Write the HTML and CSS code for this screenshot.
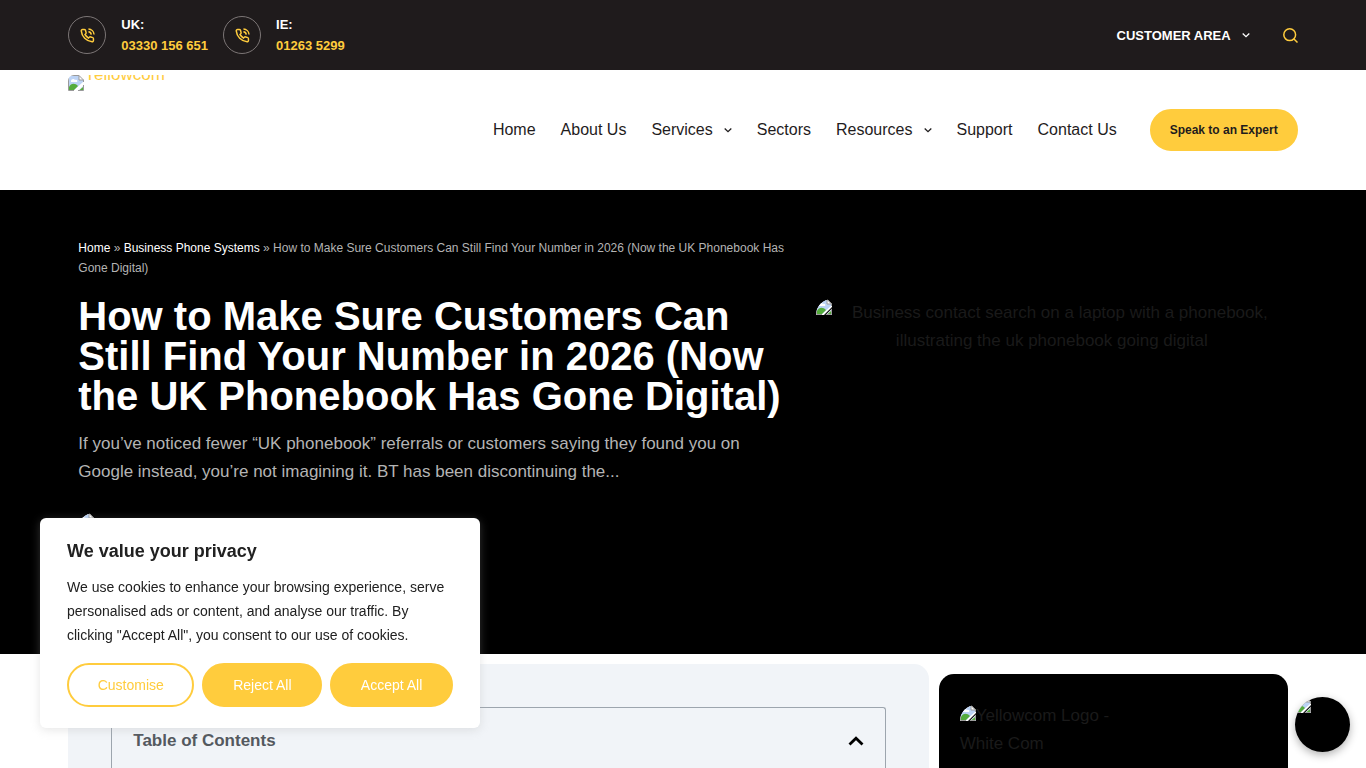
FILE: index.html
```html
<!DOCTYPE html>
<html lang="en">
<head>
  <meta charset="UTF-8">
  <title>How to Make Sure Customers Can Still Find Your Number in 2026 - Yellowcom</title>
  <meta name="viewport" content="width=device-width, initial-scale=1">
  <link rel="stylesheet" href="styles.css">
</head>
<body>
  <!-- Shared icons -->
  <svg class="sprite" aria-hidden="true">
    <symbol id="missing" viewBox="0 0 16 16">
      <path d="M0 0h11l5 5v3L8 16H0z" fill="#fff"/>
      <path d="M1 1h10v4h4v2L6 15H1z" fill="#bcd3f5"/>
      <path d="M3 6c0-2 3-3 4-1 2-1 3 1 2 2H3z" fill="#fff"/>
      <path d="M1 15v-3c2-4 6-4 9-1l-4 4z" fill="#55ac3c"/>
      <path d="M16 9.500V16H9.500z" fill="#e4eefb"/>
      <path d="M15 12v3h-3.500z" fill="#55ac3c"/>
      <path d="M.5 15.500V.5H11l4.500 4.500v2M11 .5V5h4.500M15.500 10v5.500H10M.5 15.500H6" fill="none" stroke="#9a9a9a"/>
    </symbol>
    <symbol id="phone" viewBox="0 0 24 24">
      <path d="M21.500 17v3a2 2 0 0 1-2.200 2A19 19 0 0 1 2 4.700 2 2 0 0 1 4 2.500h3a2 2 0 0 1 2 1.700c.1 1 .4 1.900.7 2.800a2 2 0 0 1-.5 2.100L8 10.400a16 16 0 0 0 5.600 5.600l1.300-1.200a2 2 0 0 1 2.100-.5c.9.3 1.800.6 2.800.7a2 2 0 0 1 1.700 2zM13.500 6a5 5 0 0 1 4.500 4.500M13.500 1.500a9.500 9.500 0 0 1 9 9" fill="none" stroke="currentColor" stroke-width="2.400"/>
    </symbol>
    <symbol id="chevron" viewBox="0 0 8 8">
      <path d="M.7 2.500 4 5.700l3.300-3.200" fill="none" stroke="currentColor" stroke-width="1.300"/>
    </symbol>
  </svg>

  <div class="topbar">
    <div class="container">
      <div class="contact">
        <span class="contact-icon"><svg><use href="#phone"/></svg></span>
        <p>UK:<br><a href="tel:03330156651">03330 156 651</a></p>
      </div>
      <div class="contact">
        <span class="contact-icon"><svg><use href="#phone"/></svg></span>
        <p>IE:<br><a href="tel:012635299">01263 5299</a></p>
      </div>
      <a class="customer dropdown" href="#">CUSTOMER AREA<svg class="chevron"><use href="#chevron"/></svg></a>
      <button class="search" type="button" aria-label="Search">
        <svg viewBox="0 0 15 15"><circle cx="6.700" cy="6.700" r="5.900" fill="none" stroke="currentColor" stroke-width="1.500"/><path d="m11 11 3.500 3.500" stroke="currentColor" stroke-width="1.500"/></svg>
      </button>
    </div>
  </div>

  <header class="header">
    <div class="container">
      <a class="logo" href="#"><svg class="missing"><use href="#missing"/></svg><span>Yellowcom</span></a>
      <nav class="menu">
        <a href="#">Home</a>
        <a href="#">About Us</a>
        <a class="dropdown" href="#">Services<svg class="chevron"><use href="#chevron"/></svg></a>
        <a href="#">Sectors</a>
        <a class="dropdown" href="#">Resources<svg class="chevron"><use href="#chevron"/></svg></a>
        <a href="#">Support</a>
        <a href="#">Contact Us</a>
      </nav>
      <button class="btn expert" type="button">Speak to an Expert</button>
    </div>
  </header>

  <section class="hero">
    <div class="container">
      <div class="hero-text">
        <p class="breadcrumbs"><a href="#">Home</a> » <a href="#">Business Phone Systems</a> » How to Make Sure Customers Can Still Find Your Number in 2026 (Now the UK Phonebook Has Gone Digital)</p>
        <h1>How to Make Sure Customers Can Still Find Your Number in 2026 (Now the UK Phonebook Has Gone Digital)</h1>
        <p class="excerpt">If you’ve noticed fewer “UK phonebook” referrals or customers saying they found you on Google instead, you’re not imagining it. BT has been discontinuing the...</p>
        <svg class="missing round"><use href="#missing"/></svg>
      </div>
      <div class="hero-image">
        <svg class="missing round"><use href="#missing"/></svg>
        <p>Business contact search on a laptop with a phonebook, illustrating the uk phonebook going digital</p>
      </div>
    </div>
  </section>

  <main class="container content">
    <article class="article">
      <div class="toc">
        <h4>Table of Contents</h4>
        <button type="button" aria-label="Close table of contents">
          <svg viewBox="0 0 16 10"><path d="m1.500 8.500 6.500-6.300 6.500 6.300" fill="none" stroke="currentColor" stroke-width="2.800"/></svg>
        </button>
      </div>
    </article>
    <aside class="sidebar">
      <p><svg class="missing round"><use href="#missing"/></svg>Yellowcom Logo - White Com</p>
    </aside>
  </main>

  <div class="cookies" role="dialog" aria-labelledby="cookies-title">
    <h2 id="cookies-title">We value your privacy</h2>
    <p>We use cookies to enhance your browsing experience, serve personalised ads or content, and analyse our traffic. By clicking "Accept All", you consent to our use of cookies.</p>
    <div class="cookies-buttons">
      <button class="btn outline" type="button">Customise</button>
      <button class="btn" type="button">Reject All</button>
      <button class="btn" type="button">Accept All</button>
    </div>
  </div>

  <button class="chat" type="button" aria-label="Open chat"><svg class="missing"><use href="#missing"/></svg></button>
</body>
</html>
```
FILE: styles.css
```css
* {
  box-sizing: border-box;
}

body {
  font-family: "Liberation Sans", Arial, sans-serif;
  font-size: 17px;
  line-height: 28px;
  margin: 0;
  height: 100vh;
  overflow: hidden;
  display: flex;
  flex-direction: column;
  color: #1f1c1d;
  background: #fff;
}

h1, h2, h4, p {
  margin: 0;
}

a {
  color: inherit;
  text-decoration: none;
}

button {
  font-family: inherit;
  color: #000;
  border: none;
  padding: 0;
  background: none;
  cursor: pointer;
}

.sprite {
  position: absolute;
  width: 0;
  height: 0;
}

.container {
  width: 90%;
  max-width: 1230px;
  margin: 0 auto;
  display: flex;
}

.missing {
  width: 16px;
  height: 16px;
  flex: none;
}

.round {
  border-radius: 16px 0 0 0;
}

.dropdown {
  display: flex;
  align-items: center;
  gap: 11px;
}

.chevron {
  width: 8px;
  height: 8px;
}

.btn {
  background: #ffcc3d;
  border: 2px solid #ffcc3d;
  border-radius: 22px;
}

/* Top bar */
.topbar {
  background: #1f1b1c;
  color: #fff;
  font-size: 13px;
  font-weight: bold;
  line-height: 21px;
  flex: none;
}

.topbar .container {
  height: 70px;
  align-items: center;
}

.contact {
  display: flex;
  align-items: center;
  gap: 15px;
  margin-right: 15px;
}

.contact a {
  color: #ffcc3d;
}

.contact-icon {
  width: 38px;
  height: 38px;
  border: 1px solid #7c7676;
  border-radius: 50%;
  color: #ffcc3d;
  display: flex;
  align-items: center;
  justify-content: center;
}

.contact-icon svg {
  width: 15px;
  height: 15px;
}

.customer {
  margin-left: auto;
}

.search {
  color: #ffcc3d;
  margin-left: 33px;
  width: 15px;
  height: 15px;
}

.search svg {
  display: block;
}

/* Header */
.header {
  flex: none;
}

.header .container {
  height: 120px;
  align-items: center;
}

.logo {
  align-self: flex-start;
  display: flex;
  height: 110px;
  margin-top: 5px;
  overflow: hidden;
  line-height: 0;
  color: #ffcc3d;
  border-radius: 6px 0 0 0;
}

.menu {
  display: flex;
  gap: 25px;
  margin-left: auto;
  font-size: 16px;
}

.expert {
  margin-left: 33px;
  width: 148px;
  height: 42px;
  font-size: 12px;
  font-weight: bold;
  color: #1f1c1d;
}

/* Hero */
.hero {
  background: #000;
  height: 464px;
  flex: none;
}

.hero .container {
  padding: 48px 10px 0;
}

.hero-text {
  flex: 3;
  padding-right: 10px;
}

.breadcrumbs {
  font-size: 12px;
  line-height: 20px;
  color: #b4b4b4;
}

.breadcrumbs a {
  color: #fff;
}

h1 {
  font-size: 40px;
  line-height: 40px;
  color: #fff;
  margin: 18px 0 14px;
}

.excerpt {
  color: #b4b4b4;
}

.hero-text .missing {
  display: block;
  margin-top: 27px;
}

.hero-image {
  flex: 2;
  position: relative;
  margin: 61px 0 0 20px;
  text-align: center;
  text-indent: 16px;
  color: #1a1a1a;
}

.hero-image .missing {
  position: absolute;
  left: 0;
  top: 0;
}

/* Article and sidebar */
.content {
  flex: 1;
  min-height: 0;
}

.article {
  flex: 1;
  margin-top: 10px;
  padding: 43px 43px 0;
  background: #f1f4f8;
  border-radius: 15px 15px 0 0;
}

.toc {
  height: 100%;
  padding: 19px 21px;
  border: 1px solid #9da5ae;
  border-bottom: none;
  border-radius: 3px 3px 0 0;
  display: flex;
  justify-content: space-between;
  align-items: flex-start;
}

.toc h4 {
  font-size: 17px;
  color: #54595f;
}

.toc button {
  width: 16px;
  height: 28px;
}

.sidebar {
  width: 349px;
  margin: 20px 10px 0;
  padding: 28px 21px 0;
  background: #000;
  color: #1a1a1a;
  border-radius: 15px 15px 0 0;
}

.sidebar p {
  max-width: 155px;
}

/* Cookie notice */
.cookies {
  position: fixed;
  left: 40px;
  bottom: 40px;
  width: 440px;
  padding: 21px 27px;
  background: #fff;
  color: #212121;
  border-radius: 6px;
  box-shadow: 0 2px 10px rgba(172, 171, 171, 0.3);
}

.cookies h2 {
  font-size: 18px;
  line-height: 24px;
  margin-bottom: 12px;
}

.cookies p {
  font-size: 14px;
  line-height: 24px;
}

.cookies-buttons {
  display: flex;
  gap: 8px;
  margin-top: 16px;
}

.cookies .btn {
  flex: auto;
  height: 44px;
  font-size: 14px;
  color: #fff;
}

.cookies .outline {
  background: #fff;
  color: #ffcc3d;
}

/* Chat bubble */
.chat {
  position: fixed;
  right: 16px;
  bottom: 16px;
  width: 55px;
  height: 55px;
  border-radius: 50%;
  background: #000;
  overflow: hidden;
  display: flex;
  box-shadow: 0 3px 8px rgba(0, 0, 0, 0.3);
}
```
